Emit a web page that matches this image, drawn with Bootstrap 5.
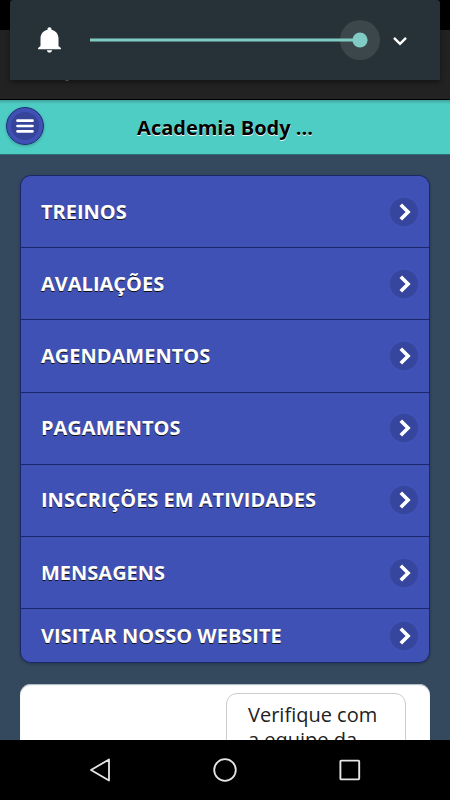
<!DOCTYPE html>
<html lang="pt-BR">
<head>
<meta charset="utf-8">
<meta name="viewport" content="width=device-width, initial-scale=1">
<title>Academia Body</title>
<link href="https://cdn.jsdelivr.net/npm/bootstrap@5.3.0/dist/css/bootstrap.min.css" rel="stylesheet">
<style>
  body { font-family: "Open Sans", "Noto Sans", sans-serif; background: #000; }
  .phone { width: 450px; height: 800px; background: #000; }
  .status-strip { height: 30px; background: #000; }
  .action-strip { height: 70px; background: #222; border-bottom: 1px solid #000; }
  .title-fragment { width: 4px; height: 2px; margin: 49px 0 0 65px; background: #858585; border-radius: 0 0 2px 2px; }
  .volume-panel { left: 10px; width: 430px; height: 80px; background: #263238; border-radius: 3px 3px 0 0; box-shadow: 0 2px 5px rgba(0,0,0,.45); z-index: 2; }
  .app-header { height: 55px; background: #4ecdc4; border-bottom: 1px solid #2c6f78; box-shadow: inset 0 4px 3px -2px rgba(0,0,0,.2); }
  .app-title { font-size: 20px; line-height: 27px; padding: 0 44px 0 0; color: #000; text-shadow: 0 1px 0 #f3f3f3; }
  .menu-btn { width: 38px; height: 38px; margin: 0 0 2px 6px; background: radial-gradient(circle, #36449a 0 13.5px, #3f51b5 14.5px); border: 1px solid #1f2d77; box-shadow: 0 1px 3px rgba(0,0,0,.25); }
  .app-content { height: 585px; padding: 20px 20px 0; background: #34495e; }
  .menu-list { height: 488px; border: 1px solid #1b2769; border-radius: 11px; background: #3f51b5; box-shadow: 0 1px 3px rgba(0,0,0,.25); }
  .menu-row { height: 72.2px; padding: 0 11px 0 20px; background: #3f51b5; border: 0; border-bottom: 1px solid #1b2769; color: #fff; font-size: 20px; font-weight: 700; line-height: 26px; text-shadow: 0 1px 0 #111; }
  .menu-row:last-child { height: 53px; border-bottom: 0; padding-bottom: 0; }
  .arrow-disc { width: 28px; height: 28px; background: #36459d; }
  .info-card { height: 300px; margin-top: 21px; padding: 9px 24px 0 0; border-radius: 11px; background: #fff; box-shadow: inset 0 1px 1px #a8b4c0; }
  .note-bubble { width: 180px; height: 200px; padding: 8px 19px 0 21px; border: 1px solid #ccc; border-radius: 11px; color: #222; font-size: 20px; line-height: 25px; }
  .system-nav { height: 60px; background: #000; padding: 0 87px; }
</style>
</head>
<body>
<div class="phone position-relative overflow-hidden d-flex flex-column">
  <div class="status-strip flex-shrink-0"></div>
  <div class="action-strip flex-shrink-0 d-flex"><div class="title-fragment"></div></div>

  <div class="volume-panel position-absolute top-0">
    <svg class="d-block" width="430" height="80" viewBox="0 0 430 80" aria-hidden="true">
      <path fill="#fff" d="M39.5 27.2c-1.3 0-2 .9-2 2v.6c-4.300 1.100-7 4.300-7 8.700v7.500l-2.400 2v1.200h22.800v-1.200l-2.400-2v-7.500c0-4.400-2.700-7.600-7-8.700v-.6c0-1.100-.7-2-2-2zM36.900 50.300c.3 1.500 1.200 2.300 2.600 2.300s2.300-.8 2.600-2.300z"/>
      <path stroke="#80cbc4" stroke-width="3" d="M80 40H350"/>
      <circle cx="350" cy="40" r="20" fill="#3c474c"/>
      <path stroke="#80cbc4" stroke-width="3" d="M330 40H350"/>
      <circle cx="350" cy="40" r="7.600" fill="#80cbc4"/>
      <path fill="none" stroke="#fff" stroke-width="2.500" d="M384 37.800l6 6 6-6"/>
    </svg>
  </div>

  <header class="app-header flex-shrink-0 d-flex align-items-center">
    <button class="menu-btn btn rounded-circle p-0 d-flex align-items-center justify-content-center" aria-label="Menu">
      <svg width="20" height="16" viewBox="0 0 20 16"><path stroke="#fff" stroke-width="2.700" stroke-linecap="round" d="M2.500 2.700h15M2.500 8h15M2.500 13.300h15"/></svg>
    </button>
    <h1 class="app-title fw-bold flex-grow-1 text-center mb-0">Academia Body ...</h1>
  </header>

  <main class="app-content flex-shrink-0 overflow-hidden">
    <nav class="menu-list list-group overflow-hidden">
      <a class="menu-row list-group-item d-flex align-items-center justify-content-between flex-shrink-0">TREINOS<span class="arrow-disc rounded-circle"><svg class="d-block" width="28" height="28"><path fill="none" stroke="#fff" stroke-width="3.600" d="M10.800 6.700l7.300 7.300-7.300 7.300"/></svg></span></a>
      <a class="menu-row list-group-item d-flex align-items-center justify-content-between flex-shrink-0">AVALIAÇÕES<span class="arrow-disc rounded-circle"><svg class="d-block" width="28" height="28"><path fill="none" stroke="#fff" stroke-width="3.600" d="M10.800 6.700l7.300 7.300-7.300 7.300"/></svg></span></a>
      <a class="menu-row list-group-item d-flex align-items-center justify-content-between flex-shrink-0">AGENDAMENTOS<span class="arrow-disc rounded-circle"><svg class="d-block" width="28" height="28"><path fill="none" stroke="#fff" stroke-width="3.600" d="M10.800 6.700l7.300 7.300-7.300 7.300"/></svg></span></a>
      <a class="menu-row list-group-item d-flex align-items-center justify-content-between flex-shrink-0">PAGAMENTOS<span class="arrow-disc rounded-circle"><svg class="d-block" width="28" height="28"><path fill="none" stroke="#fff" stroke-width="3.600" d="M10.800 6.700l7.300 7.300-7.300 7.300"/></svg></span></a>
      <a class="menu-row list-group-item d-flex align-items-center justify-content-between flex-shrink-0">INSCRIÇÕES EM ATIVIDADES<span class="arrow-disc rounded-circle"><svg class="d-block" width="28" height="28"><path fill="none" stroke="#fff" stroke-width="3.600" d="M10.800 6.700l7.300 7.300-7.300 7.300"/></svg></span></a>
      <a class="menu-row list-group-item d-flex align-items-center justify-content-between flex-shrink-0">MENSAGENS<span class="arrow-disc rounded-circle"><svg class="d-block" width="28" height="28"><path fill="none" stroke="#fff" stroke-width="3.600" d="M10.800 6.700l7.300 7.300-7.300 7.300"/></svg></span></a>
      <a class="menu-row list-group-item d-flex align-items-center justify-content-between flex-shrink-0">VISITAR NOSSO WEBSITE<span class="arrow-disc rounded-circle"><svg class="d-block" width="28" height="28"><path fill="none" stroke="#fff" stroke-width="3.600" d="M10.800 6.700l7.300 7.300-7.300 7.300"/></svg></span></a>
    </nav>
    <section class="info-card d-flex justify-content-end">
      <div class="note-bubble">Verifique com a equipe da</div>
    </section>
  </main>

  <footer class="system-nav flex-shrink-0 d-flex align-items-center justify-content-between">
    <svg width="26" height="26" viewBox="0 0 26 26"><path fill="none" stroke="#e6e6e6" stroke-width="1.800" stroke-linejoin="round" d="M22 2.500v21L4 13z"/></svg>
    <svg width="26" height="26" viewBox="0 0 26 26"><circle cx="13" cy="13" r="10.800" fill="none" stroke="#e6e6e6" stroke-width="1.800"/></svg>
    <svg width="26" height="26" viewBox="0 0 26 26"><rect x="3.400" y="3.600" width="18.800" height="18.800" rx=".8" fill="none" stroke="#e6e6e6" stroke-width="1.900"/></svg>
  </footer>
</div>
<script src="https://cdn.jsdelivr.net/npm/bootstrap@5.3.0/dist/js/bootstrap.bundle.min.js"></script>
</body>
</html>
